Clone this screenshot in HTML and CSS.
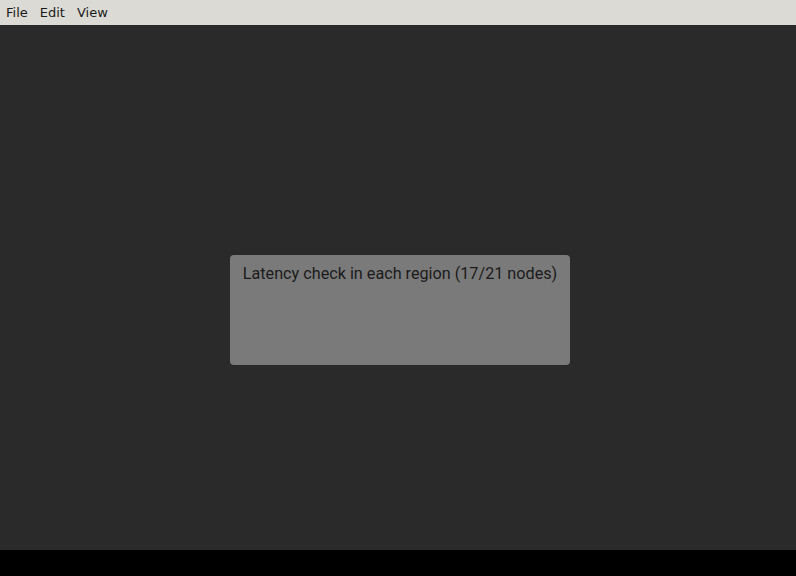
FILE: index.html
```html
<!DOCTYPE html>
<html>
<head>
<meta charset="utf-8">
<link rel="stylesheet" href="styles.css">
</head>
<body>
<div class="app">
  <div class="menubar">
    <span class="menu-item">File</span>
    <span class="menu-item">Edit</span>
    <span class="menu-item">View</span>
  </div>
  <div class="canvas">
    <div class="card">
      <div class="card-title">Latency check in each region (17/21 nodes)</div>
    </div>
  </div>
  <div class="footer"></div>
</div>
</body>
</html>
```
FILE: styles.css
```css
html, body {
  margin: 0;
  padding: 0;
  width: 796px;
  height: 576px;
  overflow: hidden;
  background: #000;
}
.app {
  display: flex;
  flex-direction: column;
  width: 796px;
  height: 576px;
}
.menubar {
  height: 25px;
  background: #dcdad5;
  display: flex;
  align-items: center;
  font-family: "DejaVu Sans", sans-serif;
  font-size: 13px;
  color: #1a1a1a;
}
.menu-item {
  padding: 0 6px;
  line-height: 25px;
}
.canvas {
  height: 525px;
  box-sizing: border-box;
  background: #2a2a2a;
  padding-top: 230px;
  padding-left: 230px;
}
.card {
  width: 340px;
  height: 110px;
  box-sizing: border-box;
  background: #7a7a7a;
  border-radius: 4px;
  padding-top: 9px;
  text-align: center;
}
.card-title {
  font-family: Roboto, sans-serif;
  font-size: 16.2px;
  line-height: 20px;
  color: #1a1a1a;
}
.footer {
  flex: 1;
  background: #000;
}
```
